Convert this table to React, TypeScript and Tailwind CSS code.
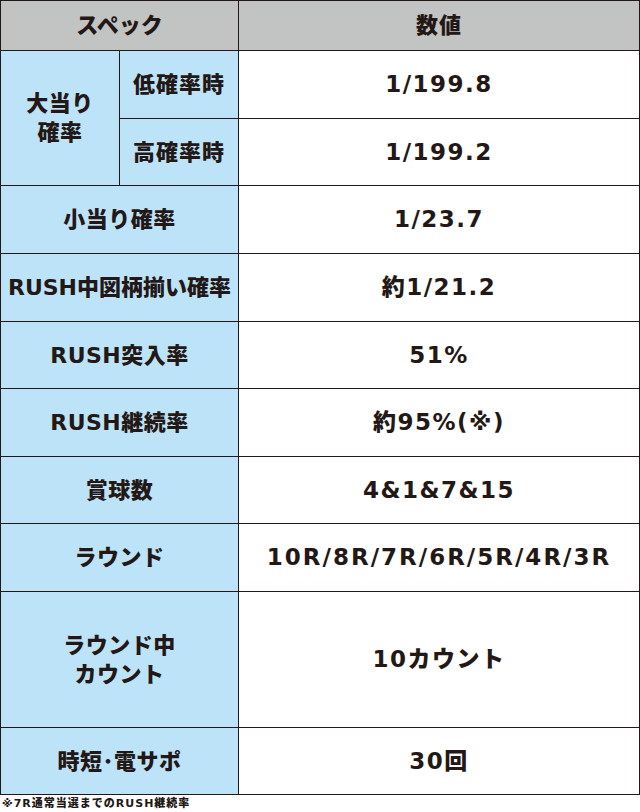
import React from "react";

const FONT = "font-['DejaVu_Sans','Noto_Sans_CJK_JP',sans-serif]";

function Label({ children, className = "" }: { children: React.ReactNode; className?: string }) {
  return (
    <div className={`bg-[#bde3f8] flex items-center justify-center text-center font-black text-[22px] tracking-[0.5px] leading-[29px] ${className}`}>
      {children}
    </div>
  );
}

function Value({ children, className = "" }: { children: React.ReactNode; className?: string }) {
  return (
    <div className={`bg-white flex items-center justify-center text-center font-black text-[23px] tracking-[1.5px] ${className}`}>
      {children}
    </div>
  );
}

export default function App() {
  return (
    <div className={`w-[640px] h-[812px] bg-white text-[#231815] ${FONT}`}>
      <div className="grid grid-cols-[118px_118px_1fr] grid-rows-[49px_67px_66px_67px_67px_66px_67px_66px_67px_67px_67px_66px] gap-px p-px bg-[#231815] w-[640px]">
        <div className="col-span-2 bg-[#c2c3c3] flex items-center justify-center font-black text-[22px]">スペック</div>
        <div className="bg-[#c2c3c3] flex items-center justify-center font-black text-[22px] tracking-[1px]">数値</div>

        <Label className="row-span-2">
          <span>
            大当り
            <br />
            確率
          </span>
        </Label>
        <Label className="tracking-[1px]">低確率時</Label>
        <Value>1/199.8</Value>

        <Label className="tracking-[1px]">高確率時</Label>
        <Value>1/199.2</Value>

        <Label className="col-span-2">小当り確率</Label>
        <Value>1/23.7</Value>

        <Label className="col-span-2 text-[21px] tracking-[0px]">RUSH中図柄揃い確率</Label>
        <Value>約1/21.2</Value>

        <Label className="col-span-2">RUSH突入率</Label>
        <Value>51%</Value>

        <Label className="col-span-2">RUSH継続率</Label>
        <Value>約95%(※)</Value>

        <Label className="col-span-2">賞球数</Label>
        <Value>4&amp;1&amp;7&amp;15</Value>

        <Label className="col-span-2">ラウンド</Label>
        <Value className="tracking-[2px]">10R/8R/7R/6R/5R/4R/3R</Value>

        <Label className="col-span-2 row-span-2">
          <span>
            ラウンド中
            <br />
            カウント
          </span>
        </Label>
        <Value className="row-span-2">10カウント</Value>

        <Label className="col-span-2">時短･電サポ</Label>
        <Value>30回</Value>
      </div>
      <div className="pl-[2px] pt-[1px] text-[11px] leading-[16px] font-black tracking-[1px]">※7R通常当選までのRUSH継続率</div>
    </div>
  );
}
